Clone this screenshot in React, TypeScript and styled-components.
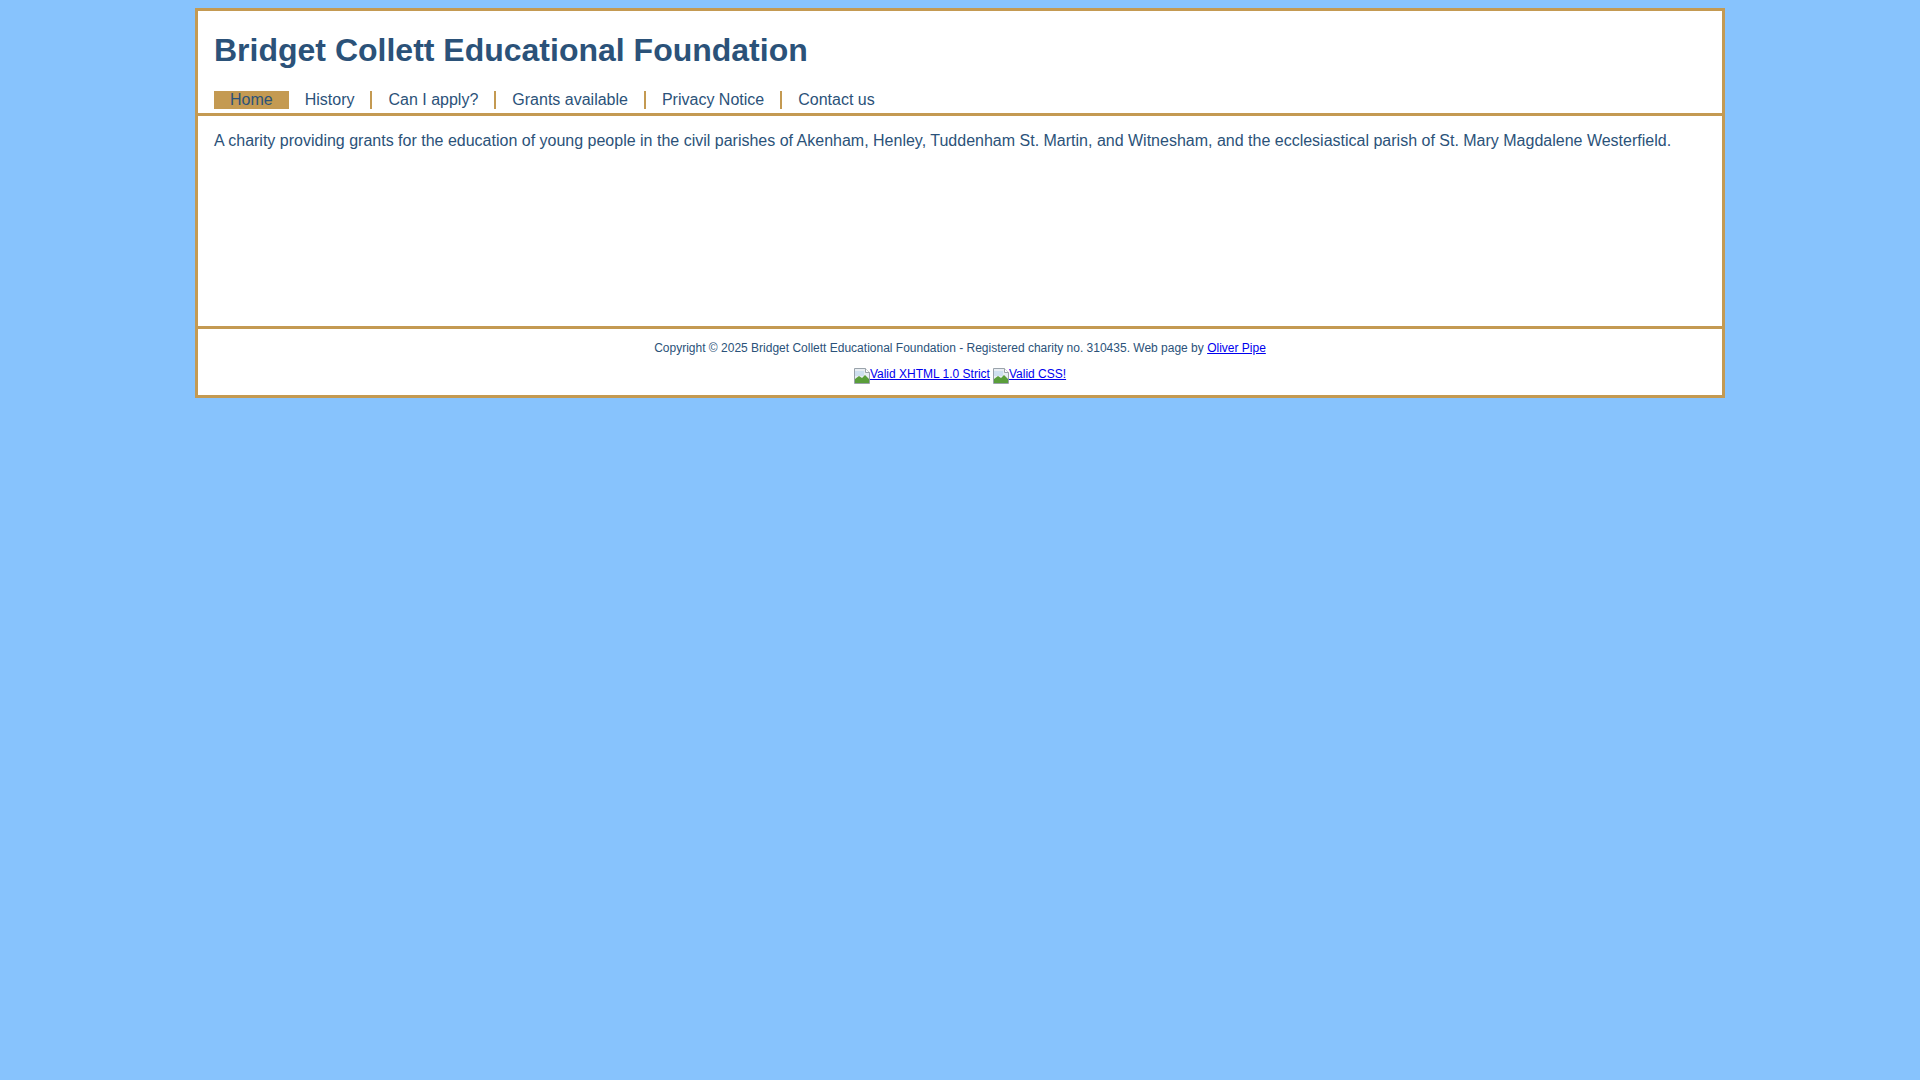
import styled, { createGlobalStyle } from "styled-components";

const GlobalStyle = createGlobalStyle`
  body {
    margin: 8px;
    background-color: #87c3fd;
    font-family: "Liberation Sans", Arial, sans-serif;
    color: #2b5279;
  }
`;

const Page = styled.div`
  width: 1524px;
  margin: 0 auto;
  background: #ffffff;
  border: 3px solid #c49a52;
`;

const Header = styled.div`
  padding: 0 16px 4px;
  border-bottom: 3px solid #c49a52;
`;

const Title = styled.h1`
  font-size: 32px;
  font-weight: bold;
  margin: 21px 0 22px;
  line-height: 37px;
  color: #2b5279;
`;

const Nav = styled.ul`
  display: flex;
  list-style: none;
  margin: 0;
  padding: 0;
`;

const NavItem = styled.li<{ $active?: boolean; $sep?: boolean }>`
  font-size: 16px;
  line-height: 18px;
  padding: 0 16px;
  background: ${(p) => (p.$active ? "#c49a52" : "transparent")};
  border-right: ${(p) => (p.$sep ? "2px solid #c49a52" : "none")};
  color: #2b5279;
  cursor: pointer;
`;

const Content = styled.div`
  min-height: 210px;
  box-sizing: border-box;
  padding: 16px 16px;
`;

const Para = styled.p`
  margin: 0;
  font-size: 16px;
  line-height: 18px;
`;

const Footer = styled.div`
  border-top: 3px solid #c49a52;
  padding: 12px 0;
  text-align: center;
  font-size: 12px;
`;

const Copy = styled.div`
  line-height: 14px;
`;

const Link = styled.a`
  color: #0000ee;
  text-decoration: underline;
`;

const Badges = styled.div`
  margin-top: 10px;
  height: 18px;
  display: flex;
  justify-content: center;
  align-items: center;
  gap: 3px;
`;

const Badge = styled.a`
  display: inline-flex;
  align-items: center;
  color: #0000ee;
  text-decoration: underline;
  font-size: 12px;
  line-height: 14px;

  svg {
    flex: none;
    margin-top: 3px;
  }
`;

const BrokenImage = () => (
  <svg width="16" height="16" viewBox="0 0 16 16">
    <path d="M0.5 0.5h11l4 4v11H0.5z" fill="#e9eef3" stroke="#9aa3ab" />
    <path d="M1 3h9v5H1z" fill="#cfe0ef" />
    <path d="M1 15V11l4-3 3 2 3-3 4 4v4z" fill="#5a9e3a" />
    <path d="M11.5 0.5v4h4" fill="#ffffff" stroke="#9aa3ab" />
  </svg>
);

const navItems = [
  "Home",
  "History",
  "Can I apply?",
  "Grants available",
  "Privacy Notice",
  "Contact us",
];

export default function App() {
  return (
    <>
      <GlobalStyle />
      <Page>
        <Header>
          <Title>Bridget Collett Educational Foundation</Title>
          <Nav>
            {navItems.map((item, i) => (
              <NavItem
                key={item}
                $active={i === 0}
                $sep={i > 0 && i < navItems.length - 1}
              >
                {item}
              </NavItem>
            ))}
          </Nav>
        </Header>
        <Content>
          <Para>
            A charity providing grants for the education of young people in the
            civil parishes of Akenham, Henley, Tuddenham St. Martin, and
            Witnesham, and the ecclesiastical parish of St. Mary Magdalene
            Westerfield.
          </Para>
        </Content>
        <Footer>
          <Copy>
            Copyright © 2025 Bridget Collett Educational Foundation - Registered
            charity no. 310435. Web page by <Link href="#">Oliver Pipe</Link>
          </Copy>
          <Badges>
            <Badge href="#">
              <BrokenImage />
              Valid XHTML 1.0 Strict
            </Badge>
            <Badge href="#">
              <BrokenImage />
              Valid CSS!
            </Badge>
          </Badges>
        </Footer>
      </Page>
    </>
  );
}
